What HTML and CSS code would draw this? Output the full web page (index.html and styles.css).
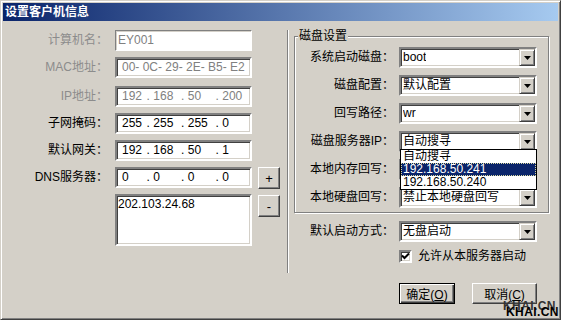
FILE: index.html
```html
<!DOCTYPE html>
<html lang="zh-CN">
<head>
    <meta charset="UTF-8">
    <meta name="viewport" content="width=device-width, initial-scale=1.0">
    <title>设置客户机信息</title>
    <link rel="stylesheet" href="styles.css">
</head>
<body>
    <div class="window">
        <div class="titlebar">设置客户机信息</div>

        <div class="content">
            <div class="left">
                <div class="row">
                    <span class="label disabled">计算机名：</span>
                    <div class="field flat gray">EY001</div>
                </div>
                <div class="row">
                    <span class="label disabled">MAC地址：</span>
                    <div class="field sunken gray pad">00- 0C- 29- 2E- B5- E2</div>
                </div>
                <div class="row row-ip">
                    <span class="label disabled">IP地址：</span>
                    <div class="field sunken gray ip"><span>192</span><span>. 168</span><span>. 50</span><span>. 200</span></div>
                </div>
                <div class="row">
                    <span class="label">子网掩码：</span>
                    <div class="field sunken ip"><span>255</span><span>. 255</span><span>. 255</span><span>. 0</span></div>
                </div>
                <div class="row">
                    <span class="label">默认网关：</span>
                    <div class="field sunken ip"><span>192</span><span>. 168</span><span>. 50</span><span>. 1</span></div>
                </div>
                <div class="row">
                    <span class="label">DNS服务器：</span>
                    <div class="field sunken ip"><span>0</span><span>. 0</span><span>. 0</span><span>. 0</span></div>
                    <button class="btn small">+</button>
                </div>
                <div class="row row-memo">
                    <span class="label"></span>
                    <div class="field sunken memo">202.103.24.68</div>
                    <button class="btn small minus">-</button>
                </div>
            </div>

            <div class="right">
                <fieldset class="group">
                    <legend>磁盘设置</legend>
                    <div class="group-body">
                        <div class="row">
                            <span class="label">系统启动磁盘：</span>
                            <div class="combo"><span class="value">boot</span><span class="arrow"><svg width="7" height="4"><path d="M0 0h7L3.5 4z"/></svg></span></div>
                        </div>
                        <div class="row">
                            <span class="label">磁盘配置：</span>
                            <div class="combo"><span class="value">默认配置</span><span class="arrow"><svg width="7" height="4"><path d="M0 0h7L3.5 4z"/></svg></span></div>
                        </div>
                        <div class="row">
                            <span class="label">回写路径：</span>
                            <div class="combo"><span class="value">wr</span><span class="arrow"><svg width="7" height="4"><path d="M0 0h7L3.5 4z"/></svg></span></div>
                        </div>
                        <div class="row">
                            <span class="label">磁盘服务器IP：</span>
                            <div class="combo open">
                                <span class="value">自动搜寻</span><span class="arrow"><svg width="7" height="4"><path d="M0 0h7L3.5 4z"/></svg></span>
                                <ul class="dropdown">
                                    <li>自动搜寻</li>
                                    <li class="selected">192.168.50.241</li>
                                    <li>192.168.50.240</li>
                                </ul>
                            </div>
                        </div>
                        <div class="row">
                            <span class="label">本地内存回写：</span>
                            <!-- covered by the open list above -->
                            <div class="combo"><span class="value"></span><span class="arrow"><svg width="7" height="4"><path d="M0 0h7L3.5 4z"/></svg></span></div>
                        </div>
                        <div class="row">
                            <span class="label">本地硬盘回写：</span>
                            <div class="combo"><span class="value">禁止本地硬盘回写</span><span class="arrow"><svg width="7" height="4"><path d="M0 0h7L3.5 4z"/></svg></span></div>
                        </div>
                    </div>
                </fieldset>

                <div class="row boot-row">
                    <span class="label">默认启动方式：</span>
                    <div class="combo"><span class="value">无盘启动</span><span class="arrow"><svg width="7" height="4"><path d="M0 0h7L3.5 4z"/></svg></span></div>
                </div>
                <div class="check-row">
                    <span class="checkbox"><svg width="9" height="9"><path d="M1 3.5l2.5 2.5 4.5-4.5" fill="none" stroke="#000" stroke-width="2"/></svg></span>
                    <span>允许从本服务器启动</span>
                </div>
                <div class="buttons">
                    <button class="btn default">确定(<u>O</u>)</button>
                    <button class="btn cancel">取消(<u>C</u>)</button>
                </div>
            </div>
        </div>

        <div class="watermark">
            <span class="wm-back">KHAI.CN</span>
            <span class="wm-front">KHAI.CN</span>
        </div>
    </div>
</body>
</html>
```

FILE: styles.css
```css
* {
    box-sizing: border-box;
}

body {
    margin: 0;
    font-family: "Liberation Sans", "Noto Sans CJK SC", sans-serif;
    font-size: 12px;
    color: #000;
    background-color: #d4d0c8;
}

.window {
    position: relative;
    width: 561px;
    height: 320px;
    padding: 2px;
    border: 1px solid;
    border-color: #d4d0c8 #404040 #404040 #d4d0c8;
    box-shadow: inset 1px 1px #fff, inset -1px -1px #808080;
    background-color: #d4d0c8;
    overflow: hidden;
}

.titlebar {
    height: 18px;
    padding-left: 2px;
    line-height: 18px;
    font-size: 12px;
    font-weight: bold;
    color: #fff;
    background: linear-gradient(to right, #0a246a, #a6caf0);
}

.content {
    display: flex;
}

/* left column with etched separator */
.left {
    width: 285px;
    height: 243px;
    margin-top: 9px;
    border-right: 1px solid #808080;
    box-shadow: 1px 0 #fff;
    display: flex;
    flex-direction: column;
    gap: 6px;
}

.row {
    display: flex;
    align-items: flex-start;
    height: 21px;
}

.label {
    line-height: 21px;
    text-align: right;
    white-space: nowrap;
}

.label.disabled {
    color: #8c8c8c;
}

.left .label {
    width: 105px;
    margin-right: 7px;
}

.row-ip {
    margin-top: 2px;
}

.row-memo {
    height: 52px;
}

.field {
    width: 137px;
    height: 21px;
    line-height: 17px;
    background-color: #fff;
    white-space: pre;
    overflow: hidden;
}

.sunken {
    border: 2px solid;
    border-color: #808080 #fff #fff #808080;
    box-shadow: inset 1px 1px #404040, inset -1px -1px #d4d0c8;
}

.flat {
    border: 1px solid;
    border-color: #808080 #fff #fff #808080;
    box-shadow: inset 1px 1px #d4d0c8;
    padding-left: 2px;
    line-height: 19px;
}

.gray {
    color: #808080;
}

.pad {
    padding-left: 5px;
}

.ip {
    display: flex;
    padding-left: 5px;
}

.ip span {
    width: 35px;
}

.ip span:first-child {
    width: 25px;
}

.memo {
    height: 52px;
    padding-left: 1px;
}

.btn {
    font-family: "Liberation Sans", "Noto Sans CJK SC", sans-serif;
    font-size: 12px;
    color: #000;
    padding: 0;
    height: 21px;
    border: 1px solid;
    border-color: #fff #404040 #404040 #fff;
    box-shadow: inset -1px -1px #808080;
    background-color: #d4d0c8;
}

.btn.small {
    width: 22px;
    height: 22px;
    margin-left: 6px;
    font-size: 13px;
}

.btn.minus {
    margin-top: 1px;
}

/* right column */
.right {
    flex: 1;
}

.group {
    width: 255px;
    margin: 8px 0 0 6px;
    padding: 4px 0;
    min-width: 0;
    border: 1px solid #808080;
    box-shadow: 1px 1px #fff, inset 1px 1px #fff;
}

.group legend {
    margin-left: 3px;
    padding: 0 1px;
    line-height: 14px;
    background-color: #d4d0c8;
}

.group-body {
    display: flex;
    flex-direction: column;
    gap: 7px;
}

.group .label {
    width: 99px;
    margin-right: 5px;
}

.right > .row .label {
    width: 106px;
    margin-right: 5px;
}

.combo {
    position: relative;
    display: flex;
    justify-content: space-between;
    width: 138px;
    height: 21px;
    padding-left: 2px;
    line-height: 17px;
    white-space: nowrap;
    background-color: #fff;
    border: 2px solid;
    border-color: #808080 #fff #fff #808080;
    box-shadow: inset 1px 1px #404040, inset -1px -1px #d4d0c8;
}

.combo .value {
    overflow: hidden;
}

.arrow {
    display: flex;
    align-items: center;
    justify-content: center;
    flex: none;
    width: 16px;
    height: 17px;
    border: 1px solid;
    border-color: #d4d0c8 #404040 #404040 #d4d0c8;
    box-shadow: inset 1px 1px #fff, inset -1px -1px #808080;
    background-color: #d4d0c8;
}

.dropdown {
    position: absolute;
    z-index: 10;
    left: -1px;
    top: 16px;
    width: 137px;
    margin: 0;
    padding: 0;
    list-style: none;
    border: 1px solid #000;
    background-color: #fff;
}

.dropdown li {
    height: 13px;
    line-height: 13px;
    padding-left: 2px;
}

.dropdown li.selected {
    color: #fff;
    background-color: #0a246a;
    outline: 1px dotted #d8d8a0;
    outline-offset: -1px;
}

.boot-row {
    margin-top: 8px;
}

.check-row {
    display: flex;
    align-items: center;
    height: 13px;
    margin-top: 8px;
    padding-left: 111px;
    line-height: 13px;
}

.checkbox {
    display: flex;
    align-items: center;
    justify-content: center;
    width: 13px;
    height: 13px;
    margin-right: 6px;
    background-color: #fff;
    border: 2px solid;
    border-color: #808080 #fff #fff #808080;
    box-shadow: inset 1px 1px #404040, inset -1px -1px #d4d0c8;
}

.buttons {
    display: flex;
    gap: 17px;
    margin-top: 20px;
    padding-left: 111px;
}

.btn.default {
    width: 56px;
    border-color: #000;
    box-shadow: inset 1px 1px #fff, inset -1px -1px #404040, inset -2px -2px #808080;
}

.btn.cancel {
    width: 65px;
}

/* site watermark stamped over the corner */
.watermark {
    position: absolute;
    left: 502px;
    top: 299px;
    font-weight: bold;
    font-size: 12px;
    line-height: 12px;
    letter-spacing: 0.4px;
}

.watermark span {
    position: absolute;
    white-space: nowrap;
}

.wm-back {
    left: 0;
    top: 0;
    color: #333;
}

.wm-front {
    left: 3px;
    top: 6px;
    color: #000;
}
```
